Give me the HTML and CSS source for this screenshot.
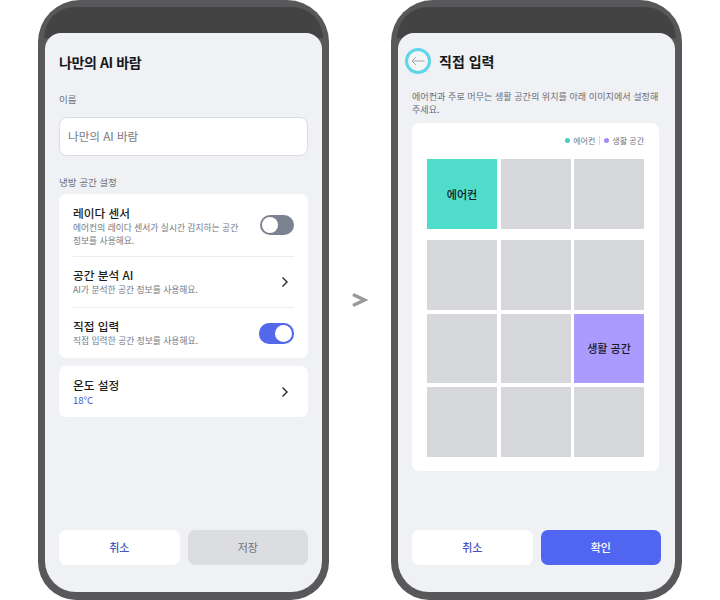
FILE: index.html
```html
<!DOCTYPE html>
<html lang="ko">
<head>
<meta charset="utf-8">
<title>나만의 AI 바람</title>
<link rel="stylesheet" href="styles.css">
</head>
<body>
<main class="stage">
  <section class="phone">
    <div class="notch"></div>
    <div class="screen">
      <h1 class="title title-left">나만의 AI 바람</h1>
      <div class="label label-name">이름</div>
      <div class="input">나만의 AI 바람</div>
      <div class="label label-section">냉방 공간 설정</div>
      <div class="card">
        <div class="row row-a">
          <div class="row-text">
            <div class="row-title">레이다 센서</div>
            <div class="row-desc">에어컨의 레이다 센서가 실시간 감지하는 공간<br>정보를 사용해요.</div>
          </div>
          <span class="toggle"><span class="knob"></span></span>
        </div>
        <div class="row row-b">
          <div class="row-text">
            <div class="row-title">공간 분석 AI</div>
            <div class="row-desc">AI가 분석한 공간 정보를 사용해요.</div>
          </div>
          <svg class="chev" width="10" height="14" viewBox="0 0 10 14"><path d="M2.5 2.500 7 7l-4.500 4.500" fill="none" stroke="#26282c" stroke-width="1.400"/></svg>
        </div>
        <div class="row row-c">
          <div class="row-text">
            <div class="row-title">직접 입력</div>
            <div class="row-desc">직접 입력한 공간 정보를 사용해요.</div>
          </div>
          <span class="toggle on"><span class="knob"></span></span>
        </div>
      </div>
      <div class="card card-temp">
        <div class="row row-d">
          <div class="row-text">
            <div class="row-title">온도 설정</div>
            <div class="row-desc temp">18°C</div>
          </div>
          <svg class="chev" width="10" height="14" viewBox="0 0 10 14"><path d="M2.5 2.500 7 7l-4.500 4.500" fill="none" stroke="#26282c" stroke-width="1.400"/></svg>
        </div>
      </div>
      <div class="actions">
        <div class="btn btn-cancel">취소</div>
        <div class="btn btn-off">저장</div>
      </div>
    </div>
  </section>

  <svg class="next" width="16" height="16" viewBox="0 0 16 16"><path d="M1 2.500 12.500 8 1 13.500" fill="none" stroke="#98999b" stroke-width="3.400"/></svg>

  <section class="phone">
    <div class="notch"></div>
    <div class="screen">
      <header class="head">
        <span class="back">
          <svg width="14" height="10" viewBox="0 0 14 10"><path d="M13.500 5H1M5 1 1 5l4 4" fill="none" stroke="#a5a7ad" stroke-width="1"/></svg>
        </span>
        <h1 class="title">직접 입력</h1>
      </header>
      <p class="intro">에어컨과 주로 머무는 생활 공간의 위치를 아래 이미지에서 설정해<br>주세요.</p>
      <div class="map">
        <div class="legend">
          <span class="dot dot-teal"></span><span>에어컨</span><span class="sep"></span><span class="dot dot-violet"></span><span>생활 공간</span>
        </div>
        <div class="grid">
          <div class="cell cell-teal">에어컨</div><div class="cell"></div><div class="cell"></div>
          <div class="cell"></div><div class="cell"></div><div class="cell"></div>
          <div class="cell"></div><div class="cell"></div><div class="cell cell-violet">생활 공간</div>
          <div class="cell"></div><div class="cell"></div><div class="cell"></div>
        </div>
      </div>
      <div class="actions">
        <div class="btn btn-cancel">취소</div>
        <div class="btn btn-ok">확인</div>
      </div>
    </div>
  </section>
</main>
</body>
</html>
```
FILE: styles.css
```css
* { box-sizing: border-box; }
html, body { margin: 0; padding: 0; background: #fff; }
body { font-family: "Noto Sans CJK KR", "Noto Sans", sans-serif; color: #1c1d20; }
.stage { width: 720px; height: 600px; padding-left: 38px; display: flex; align-items: flex-start; overflow: hidden; }
.phone { flex: none; width: 291px; height: 600px; background: #58585a; border-radius: 42px 42px 38px 38px; padding: 2px 7px 8px; display: flex; flex-direction: column; }
.notch { flex: none; height: 31px; margin: 5px -1px -5px; background: #434343; border-radius: 32px 32px 0 0; }
.screen { flex: 1; min-height: 0; background: #eff1f4; border-radius: 16px 16px 31px 31px; padding: 0 14px 27px; display: flex; flex-direction: column; }
.title { margin: 0; font-size: 14px; line-height: 20px; font-weight: 700; color: #17181a; }
.title-left { margin-top: 19px; letter-spacing: -0.4px; }
.label { font-size: 9.500px; line-height: 14px; color: #6d7078; }
.label-name { margin-top: 20px; }
.input { margin-top: 11px; height: 39px; width: 249px; background: #fff; border: 1px solid #d9dce5; border-radius: 8px; padding-left: 8px; font-size: 11.600px; line-height: 37px; color: #77797d; }
.label-section { margin-top: 19px; }
.card { margin-top: 5px; width: 249px; background: #fff; border-radius: 7px; padding: 0 14px; }
.card-temp { margin-top: 8px; }
.row { display: flex; align-items: center; justify-content: space-between; }
.row + .row { border-top: 1px solid #ebedf0; }
.row-a { height: 62px; }
.row-b, .row-c, .row-d { height: 51px; }
.row-title { font-size: 11.700px; line-height: 17px; font-weight: 500; color: #1c1d20; }
.row-desc { font-size: 8.750px; line-height: 13px; color: #75787f; }
.temp { font-size: 9.500px; line-height: 14px; color: #3f51c8; }
.row-text { flex: none; }
.row-b .row-text, .row-c .row-text { margin-top: -2px; }
.chev { flex: none; margin-right: 4px; }
.toggle { flex: none; width: 34px; height: 20px; border-radius: 10px; background: #7b818e; padding: 2px; display: flex; }
.knob { width: 16px; height: 16px; border-radius: 50%; background: #fff; }
.toggle.on { background: #5468ec; justify-content: flex-end; width: 35px; height: 21px; }
.toggle.on .knob { width: 17px; height: 17px; }
.actions { margin-top: auto; display: flex; gap: 8px; width: 249px; }
.btn { flex: 1; height: 35px; border-radius: 7px; font-size: 11px; line-height: 35px; text-align: center; }
.btn-cancel { background: #fff; color: #4455c0; font-weight: 500; }
.btn-off { background: #dcdde0; color: #707175; }
.btn-ok { background: #5066f0; color: #fff; font-weight: 500; }
.next { flex: none; margin: 292px 23px 0; }
.head { display: flex; align-items: center; gap: 8px; margin: 15px 0 0 -7px; height: 26px; }
.back { flex: none; width: 26px; height: 26px; border: 3px solid #5fd6e8; border-radius: 50%; background: #f4f5f7; display: flex; align-items: center; justify-content: center; }
.intro { margin: 16px 0 0; width: 250px; font-size: 9.100px; line-height: 13.300px; color: #6a6d75; white-space: nowrap; }
.map { margin-top: 6.400px; width: 247px; height: 348px; background: #fff; border-radius: 7px; padding: 10px 15px 0; }
.legend { height: 16px; display: flex; justify-content: flex-end; align-items: center; gap: 3px; font-size: 8px; line-height: 16px; color: #72757c; }
.dot { width: 5px; height: 5px; border-radius: 50%; }
.dot-teal { background: #3fcfc4; }
.dot-violet { background: #a08df0; }
.sep { width: 1px; height: 9px; background: #d8dade; margin: 0 1px; }
.grid { margin-top: 10px; display: grid; grid-template-columns: 70px 70px 70px; grid-template-rows: 77px 70px 69px 70px; column-gap: 3.500px; row-gap: 4px; }
.cell { background: #d6d7da; display: flex; align-items: center; justify-content: center; font-size: 11px; font-weight: 500; color: #17181f; }
.cell:nth-child(-n+3) { margin-bottom: 7px; }
.cell-teal { background: #4fdccb; }
.cell-violet { background: #ac9bff; }
```
